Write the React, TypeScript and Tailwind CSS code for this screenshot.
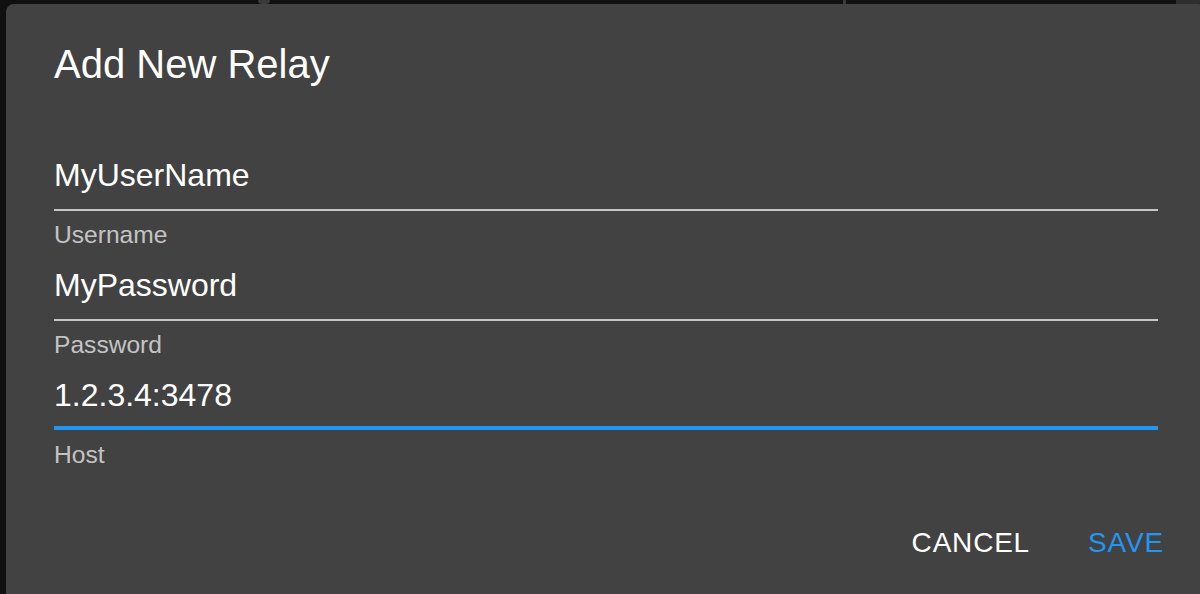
import React from "react";

function Field({
  value,
  label,
  focused = false,
  first = false,
}: {
  value: string;
  label: string;
  focused?: boolean;
  first?: boolean;
}) {
  return (
    <div className={first ? "flex flex-col" : "flex flex-col mt-[14px]"}>
      <div
        className={
          focused
            ? "pb-[10px] border-b-4 border-[#2196f3]"
            : "pb-[13px] border-b-2 border-white/70"
        }
      >
        <div className="text-[32px] leading-[42px] text-white">{value}</div>
      </div>
      <div
        className={
          focused
            ? "mt-[10px] text-[24.6px] leading-[30px] text-white/70"
            : "mt-[9px] text-[24.6px] leading-[30px] text-white/70"
        }
      >
        {label}
      </div>
    </div>
  );
}

export default function App() {
  return (
    <div className="w-[1200px] h-[594px] overflow-hidden bg-[#101010] flex flex-col font-['Liberation_Sans',Arial,sans-serif]">
      <div className="h-[4px] flex shrink-0">
        <div className="w-[258px]" />
        <div className="w-[12px] rounded-b-full bg-[#3a3a3a]" />
        <div className="w-[573px]" />
        <div className="w-[3px] bg-[#3a3a3a]" />
        <div className="w-[330px]" />
        <div className="flex-1 bg-[#2e2e2e]" />
      </div>
      <div className="ml-[6px] w-[1200px] shrink-0 flex-1 rounded-t-[8px] bg-[#424242] flex flex-col">
        <div className="px-[48px] pt-[36px]">
          <h2 className="text-[40px] leading-[48px] font-normal text-white">Add New Relay</h2>
        </div>
        <div className="px-[48px] pt-[66px] flex flex-col">
          <Field value="MyUserName" label="Username" first />
          <Field value="MyPassword" label="Password" />
          <Field value="1.2.3.4:3478" label="Host" focused />
        </div>
        <div className="flex justify-end gap-4 pr-4 pt-[55px]">
          <button className="min-w-[128px] px-4 text-[28px] leading-[36px] tracking-[0.8px] text-white text-center">
            CANCEL
          </button>
          <button className="min-w-[128px] px-4 text-[28px] leading-[36px] tracking-[0.8px] text-[#2196f3] text-center">
            SAVE
          </button>
        </div>
      </div>
    </div>
  );
}
